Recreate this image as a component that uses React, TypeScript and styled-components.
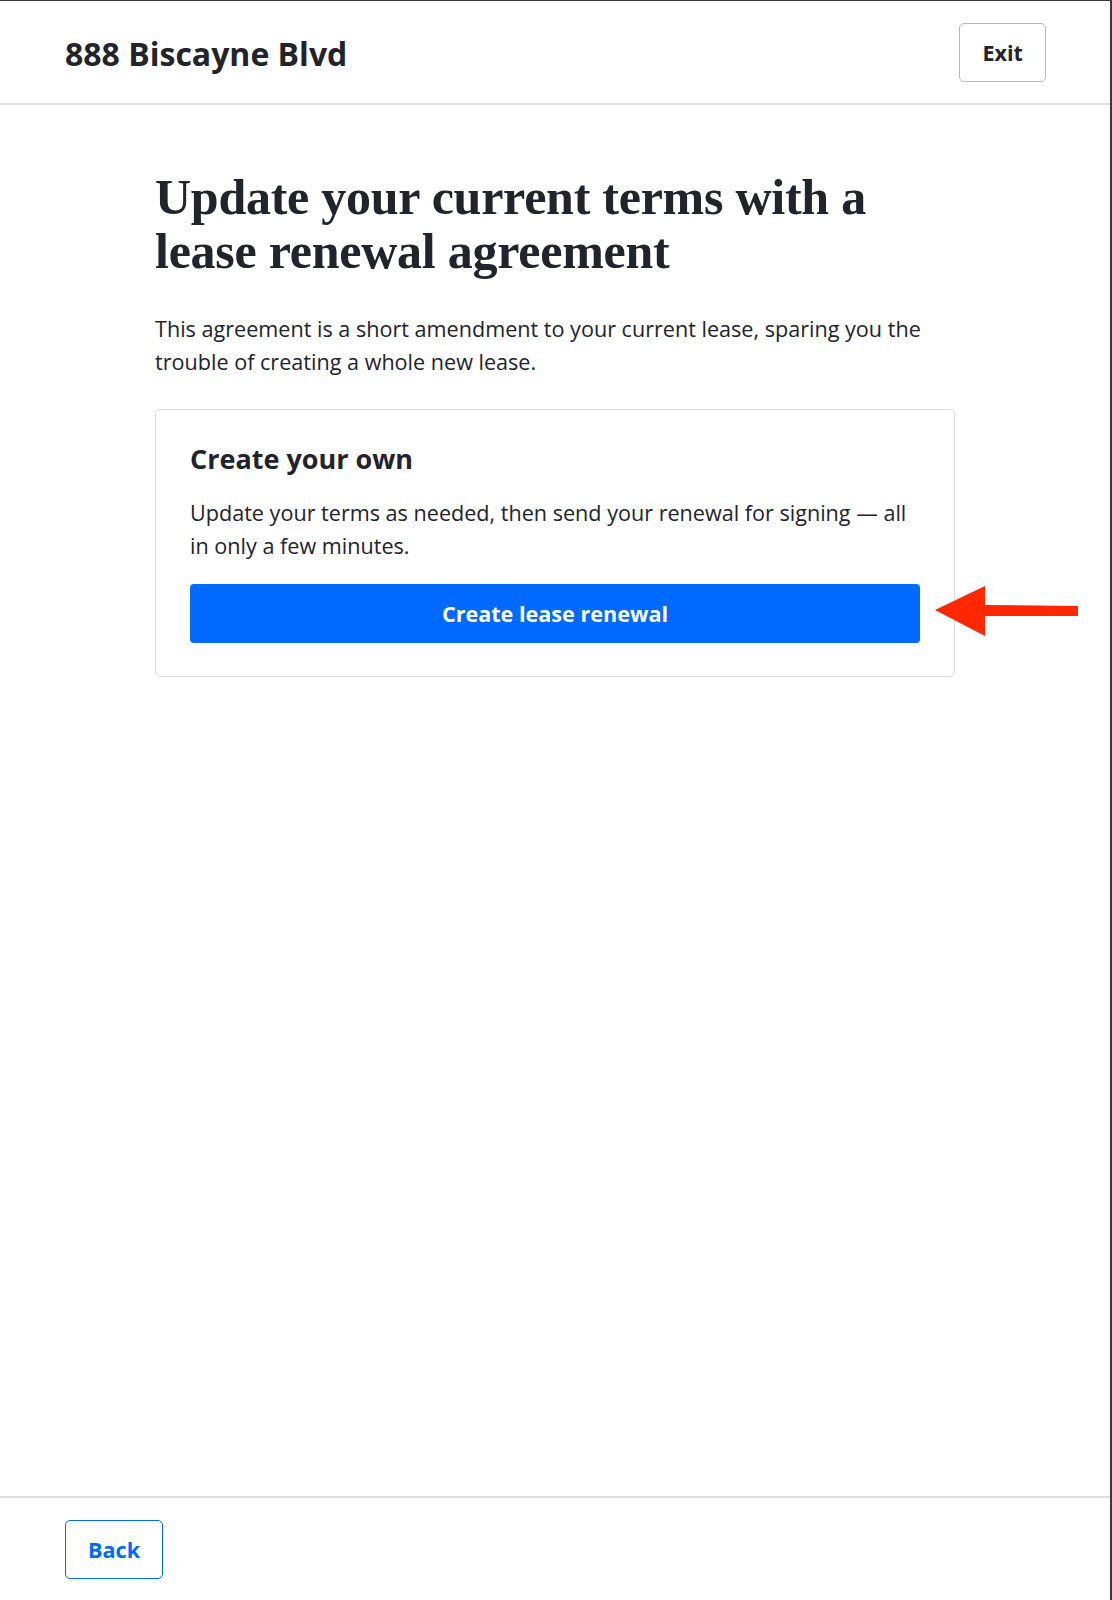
import React from "react";
import styled, { createGlobalStyle } from "styled-components";

const GlobalStyle = createGlobalStyle`
  html, body {
    margin: 0;
    padding: 0;
    background: #fff;
  }
  body {
    font-family: "Open Sans", "Liberation Sans", sans-serif;
    color: #22232b;
  }
  * {
    box-sizing: border-box;
  }
`;

/**
 * Lease renewal step: header with property name, intro, a single option card
 * and a footer with the back button.
 */
function App() {
  return (
    <>
      <GlobalStyle />
      <Frame>
        <Header>
          <PropertyName>888 Biscayne Blvd</PropertyName>
          <OutlineButton>Exit</OutlineButton>
        </Header>

        <Main>
          <Content>
            <Heading>Update your current terms with a lease renewal agreement</Heading>
            <Intro>
              This agreement is a short amendment to your current lease, sparing you the
              trouble of creating a whole new lease.
            </Intro>

            <Card>
              <CardTitle>Create your own</CardTitle>
              <CardText>
                Update your terms as needed, then send your renewal for signing — all in only
                a few minutes.
              </CardText>
              <ButtonWrap>
                <PrimaryButton>Create lease renewal</PrimaryButton>
                <Pointer>
                  <svg width="144" height="52" viewBox="0 0 144 52">
                    <polygon
                      points="0,24 50,0 50,19 143,20 143,30 50,30 50,50"
                      fill="#ff2800"
                    />
                  </svg>
                </Pointer>
              </ButtonWrap>
            </Card>
          </Content>
        </Main>

        <Footer>
          <OutlineButton $variant="blue">Back</OutlineButton>
        </Footer>
      </Frame>
    </>
  );
}

export default App;

const Frame = styled.div`
  height: 1600px;
  display: flex;
  flex-direction: column;
  border-top: 1px solid #3a3a3a;
  border-right: 2px solid #3a3a3a;
`;

const Header = styled.header`
  height: 104px;
  display: flex;
  align-items: center;
  justify-content: space-between;
  padding: 0 64px 0 65px;
  border-bottom: 2px solid #dcdcdf;
`;

const PropertyName = styled.h1`
  margin: 0 0 -2px;
  font-size: 32px;
  font-weight: 700;
  color: #22232b;
`;

const OutlineButton = styled.button<{ $variant?: "blue" }>`
  height: 59px;
  padding: 0 22px;
  background: #fff;
  border: ${(p) => (p.$variant === "blue" ? "1.5px solid #0069ff" : "1.5px solid #b8b8bc")};
  border-radius: 5px;
  font-family: "Open Sans", sans-serif;
  font-size: 21.6px;
  font-weight: 700;
  color: ${(p) => (p.$variant === "blue" ? "#0069ff" : "#22232b")};
  cursor: pointer;
`;

const Main = styled.main`
  flex: 1;
  display: flex;
  justify-content: center;
  padding-top: 65px;
`;

const Content = styled.div`
  width: 800px;
`;

const Heading = styled.h2`
  margin: 0;
  font-family: "Liberation Serif", "Times New Roman", serif;
  font-size: 50px;
  font-weight: 700;
  line-height: 54px;
  letter-spacing: -0.005em;
  color: #22232b;
  max-width: 730px;
`;

const Intro = styled.p`
  margin: 35px 0 0;
  font-size: 21.6px;
  line-height: 32.5px;
  color: #22232b;
`;

const Card = styled.section`
  display: flex;
  flex-direction: column;
  margin-top: 31px;
  padding: 30px 34px 33px;
  border: 1.5px solid #dcdcdf;
  border-radius: 5px;
`;

const CardTitle = styled.h3`
  margin: 0;
  font-size: 27px;
  font-weight: 700;
  line-height: 38px;
  color: #22232b;
`;

const CardText = styled.p`
  margin: 19px 0 22px;
  max-width: 726px;
  font-size: 21.6px;
  line-height: 32.5px;
  color: #22232b;
`;

const ButtonWrap = styled.div`
  position: relative;
`;

const PrimaryButton = styled.button`
  display: block;
  height: 59px;
  width: 100%;
  border: none;
  border-radius: 4px;
  background: #0069ff;
  color: #fff;
  font-family: "Open Sans", sans-serif;
  font-size: 21.6px;
  font-weight: 700;
  cursor: pointer;
`;

const Pointer = styled.div`
  position: absolute;
  left: calc(100% + 15px);
  top: 2px;
  line-height: 0;
`;

const Footer = styled.footer`
  height: 104px;
  display: flex;
  align-items: center;
  padding: 0 65px;
  border-top: 2px solid #dcdcdf;
`;
